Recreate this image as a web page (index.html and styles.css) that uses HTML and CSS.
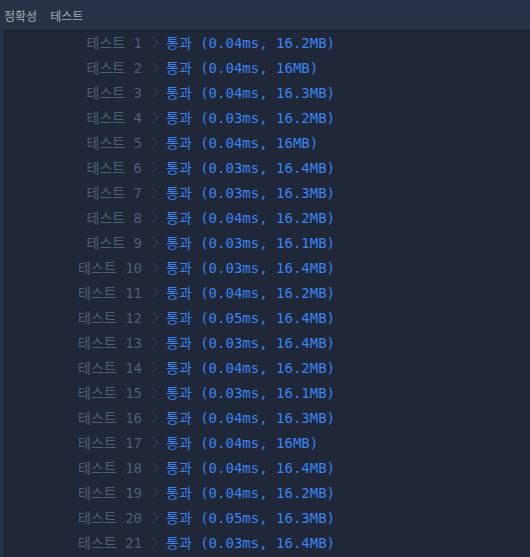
FILE: index.html
```html
<!DOCTYPE html>
<html lang="ko">
<head>
    <meta charset="UTF-8">
    <meta name="viewport" content="width=device-width, initial-scale=1.0">
    <title>채점 결과</title>
    <link rel="stylesheet" href="styles.css">
</head>
<body>
    <div class="tabs">
        <span class="tab">정확성</span>
        <span class="tab">테스트</span>
    </div>

    <div class="console" id="console"></div>

    <script>
        // results as shown in the grading console
        const results = [
            ["0.04", "16.2"], ["0.04", "16"], ["0.04", "16.3"], ["0.03", "16.2"],
            ["0.04", "16"], ["0.03", "16.4"], ["0.03", "16.3"], ["0.04", "16.2"],
            ["0.03", "16.1"], ["0.03", "16.4"], ["0.04", "16.2"], ["0.05", "16.4"],
            ["0.03", "16.4"], ["0.04", "16.2"], ["0.03", "16.1"], ["0.04", "16.3"],
            ["0.04", "16"], ["0.04", "16.4"], ["0.04", "16.2"], ["0.05", "16.3"],
            ["0.03", "16.4"]
        ];

        const chevron = '<svg class="arrow" width="8" height="13" viewBox="0 0 8 13">' +
            '<polyline points="1.5,1 6.5,6.5 1.5,12" fill="none" stroke="currentColor" stroke-width="1"/></svg>';

        let html = "";
        results.forEach(function(r, i) {
            html += '<div class="row">' +
                '<span class="label">테스트 ' + (i + 1) + '</span>' +
                chevron +
                '<span class="pass">통과 (' + r[0] + 'ms, ' + r[1] + 'MB)</span>' +
                '</div>';
        });
        document.getElementById("console").innerHTML = html;
    </script>
</body>
</html>
```

FILE: styles.css
```css
body {
    margin: 0;
    background-color: #263245;
    font-family: "Noto Sans CJK KR", "Noto Sans", sans-serif;
    overflow: hidden;
}

/* Tab bar */
.tabs {
    display: flex;
    gap: 13px;
    height: 30px;
    align-items: center;
    padding-left: 4px;
    font-size: 12px;
    color: #a2acba;
}

/* Result console */
.console {
    margin-left: 4px;
    height: 540px;
    background-color: #1f2738;
    border-top: 1px solid #172030;
    border-left: 1px solid #172030;
    font-family: "DejaVu Sans Mono", "Noto Sans CJK KR", monospace;
    font-size: 14px;
}

.row {
    display: flex;
    align-items: center;
    height: 25px;
    padding-bottom: 4px;
    box-sizing: border-box;
    white-space: pre;
}

.label {
    width: 137px;
    text-align: right;
    color: #505e74;
}

.arrow {
    color: #384457;
    margin-left: 9px;
    margin-right: 7px;
    margin-top: 2px;
}

.pass {
    color: #3d83ee;
}
```
